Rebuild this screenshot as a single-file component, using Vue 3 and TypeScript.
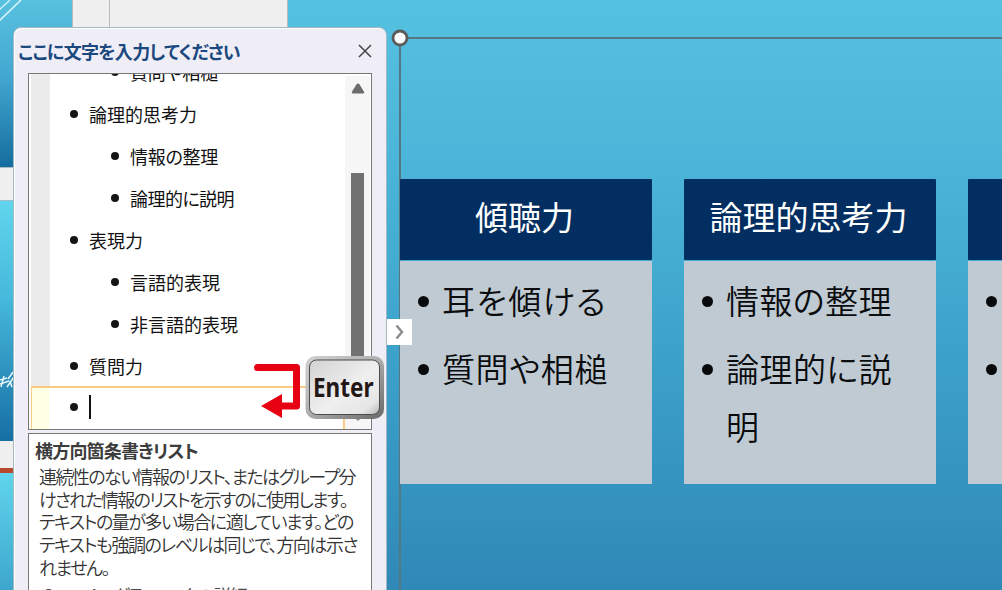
<script setup lang="ts">
interface OutlineItem {
  text: string;
  level: number;
  width: number;
}

interface Card {
  title: string;
  titleWidth: number;
  items: { text: string; width: number }[][];
}

const outline: OutlineItem[] = [
  { text: '質問や相槌', level: 2, width: 88 },
  { text: '論理的思考力', level: 1, width: 108 },
  { text: '情報の整理', level: 2, width: 88 },
  { text: '論理的に説明', level: 2, width: 104 },
  { text: '表現力', level: 1, width: 54 },
  { text: '言語的表現', level: 2, width: 90 },
  { text: '非言語的表現', level: 2, width: 108 },
  { text: '質問力', level: 1, width: 54 },
];

const description = [
  { text: '連続性のない情報のリスト、またはグループ分', width: 316 },
  { text: 'けされた情報のリストを示すのに使用します。', width: 308 },
  { text: 'テキストの量が多い場合に適しています。どの', width: 314 },
  { text: 'テキストも強調のレベルは同じで、方向は示さ', width: 318 },
  { text: 'れません。', width: 70 },
];

const cards: Card[] = [
  {
    title: '傾聴力',
    titleWidth: 99,
    items: [[{ text: '耳を傾ける', width: 165 }], [{ text: '質問や相槌', width: 166 }]],
  },
  {
    title: '論理的思考力',
    titleWidth: 198,
    items: [
      [{ text: '情報の整理', width: 166 }],
      [{ text: '論理的に説', width: 166 }, { text: '明', width: 33 }],
    ],
  },
  { title: '', titleWidth: 0, items: [[], []] },
];

// spreads or tightens the letters so that the line takes the given width
const vFit = {
  mounted(el: HTMLElement, binding: { value: number }) {
    const count = (el.textContent ?? '').length;
    if (!count || !binding.value) return;
    const natural = el.getBoundingClientRect().width;
    el.style.letterSpacing = `${(binding.value - natural) / count}px`;
  },
};
</script>

<template>
  <div class="app">
    <div class="thumbs">
      <div class="thumb first">
        <svg width="72" height="30" viewBox="0 0 72 30" fill="none" stroke="#d9f3fb">
          <path d="M-2 11 10 0" stroke-width="1.3" />
          <path d="M-2 22 21 0" stroke-width="1.6" />
        </svg>
      </div>
      <div class="thumb second">
        <svg width="14" height="26" viewBox="0 0 14 26" fill="none" stroke="#e8f8fd" stroke-width="1.5">
          <path d="M0 11 7 9M4 7 1 18M0 15 9 12M8 10 13 3M7 18 14 8M10 12 12 18" />
        </svg>
      </div>
      <div class="thumb third"></div>
    </div>
    <div class="ruler"><div class="ruler-mark"></div></div>

    <div class="slide">
      <div class="frame">
        <svg class="handle" width="20" height="20" viewBox="0 0 20 20">
          <circle cx="10" cy="10" r="7" fill="#fff" stroke="#5c5b5c" stroke-width="2.8" />
        </svg>
        <div class="cards">
          <div v-for="(card, i) in cards" :key="i" class="card">
            <div class="card-title"><span v-fit="card.titleWidth">{{ card.title }}</span></div>
            <ul class="card-body">
              <li v-for="(lines, j) in card.items" :key="j">
                <div v-for="line in lines" :key="line.text" class="card-line">
                  <span v-fit="line.width">{{ line.text }}</span>
                </div>
              </li>
            </ul>
          </div>
        </div>
      </div>
    </div>

    <div class="pane">
      <div class="pane-head">
        <div class="pane-title"><span v-fit="222">ここに文字を入力してください</span></div>
        <svg class="close" width="14" height="14" viewBox="0 0 14 14" stroke="#444" stroke-width="1.5">
          <path d="M1 1 13 13M13 1 1 13" />
        </svg>
      </div>
      <div class="outline">
        <div class="rows">
          <div v-for="(item, i) in outline" :key="i" class="row" :class="'level' + item.level">
            <i class="dot"></i>
            <span v-fit="item.width">{{ item.text }}</span>
          </div>
          <div class="row level1 active">
            <i class="dot"></i>
            <i class="caret"></i>
          </div>
        </div>
        <div class="scroll">
          <svg width="14" height="11" viewBox="0 0 14 11" fill="#6c6c6c">
            <path d="M5.7 1Q7 0 8.3 1L13.2 9Q13.5 10.5 12 10.5H2Q.5 10.5.8 9Z" />
          </svg>
          <div class="thumb-bar"></div>
          <svg class="down" width="14" height="11" viewBox="0 0 14 11" fill="#8a8a8a">
            <path d="M5.7 10Q7 11 8.3 10L13.2 2Q13.5.5 12 .5H2Q.5.5.8 2Z" />
          </svg>
        </div>
      </div>
      <div class="info">
        <div class="info-title"><span v-fit="163">横方向箇条書きリスト</span></div>
        <div v-for="line in description" :key="line.text" class="info-line">
          <span v-fit="line.width">{{ line.text }}</span>
        </div>
        <div class="info-link"><span v-fit="204">SmartArt グラフィックの詳細</span></div>
      </div>
    </div>

    <div class="toggle">
      <svg width="10" height="16" viewBox="0 0 10 16" fill="none" stroke="#8d8d8d" stroke-width="2.5">
        <path d="M1.5 1.5 7 8 1.5 14.5" />
      </svg>
    </div>

    <svg class="enter" width="136" height="72" viewBox="0 0 136 72">
      <defs>
        <linearGradient id="rim" x1="0" y1="0" x2="1" y2="1">
          <stop offset="0" stop-color="#d2d2d2" />
          <stop offset=".45" stop-color="#b2b2b2" />
          <stop offset="1" stop-color="#686868" />
        </linearGradient>
        <linearGradient id="face" x1="0" y1="0" x2="1" y2="1">
          <stop offset="0" stop-color="#d2d2d3" />
          <stop offset=".55" stop-color="#efeff0" />
          <stop offset=".85" stop-color="#e6e6e7" />
          <stop offset="1" stop-color="#b5b5b6" />
        </linearGradient>
      </defs>
      <path d="M7.5 15.5H46.500V54H32" fill="none" stroke="#e60012" stroke-width="7" stroke-linecap="round" stroke-linejoin="round" />
      <path d="M11 54 32 42V66Z" fill="#e60012" />
      <rect x="55.500" y="4" width="78.500" height="63" rx="10" fill="url(#rim)" />
      <rect x="59.500" y="8" width="70" height="54.500" rx="7" fill="url(#face)" stroke="#4b4b4b" stroke-width="1" />
      <text x="63" y="44.700" textLength="60.500" lengthAdjust="spacingAndGlyphs">Enter</text>
    </svg>
  </div>
</template>

<style>
body {
  margin: 0;
  overflow: hidden;
}
</style>

<style scoped>
.app {
  position: relative;
  display: flex;
  width: 1002px;
  height: 590px;
  overflow: hidden;
  font-family: "Noto Sans CJK JP", sans-serif;
  font-feature-settings: "palt";
  background: #efefef;
}
span {
  display: inline-block;
  white-space: nowrap;
}

/* slide thumbnails and ruler behind the pane */
.thumbs {
  display: flex;
  flex: none;
  flex-direction: column;
  width: 72px;
}
.thumb {
  box-sizing: border-box;
}
.first {
  height: 168px;
  border-bottom: 1px solid #aebdc5;
  background: linear-gradient(#58c1df, #43a8d1 45%, #156d9f);
}
.second {
  height: 241px;
  margin-top: 32px;
  padding-top: 168px;
  border-top: 1px solid #9dbdc8;
  background: linear-gradient(#61d5ed, #46b9dc 40%, #176fa3);
}
.third {
  flex: 1;
  margin-top: 27px;
  border-top: 5px solid #b9492b;
  background: linear-gradient(#60d5ed, #3da6cd);
}
.ruler {
  box-sizing: border-box;
  flex: none;
  width: 216px;
  border-left: 1px solid #bababa;
  border-right: 1px solid #bababa;
}
.ruler-mark {
  width: 36px;
  height: 100%;
  border-right: 1px solid #bababa;
}

.slide {
  box-sizing: border-box;
  flex: 1;
  min-width: 0;
  padding: 37px 0 0 111px;
  background: linear-gradient(#55c1e1 0%, #4bb3d7 30%, #3da3cb 58%, #3088b7 100%);
}
.frame {
  position: relative;
  height: 100%;
  border-left: 2px solid #557783;
  border-top: 2px solid #557783;
}
.handle {
  position: absolute;
  left: -11px;
  top: -11px;
}
.cards {
  display: flex;
  gap: 32px;
  margin: 140px 0 0 -1px;
}
.card {
  flex: none;
  width: 252px;
}
.card-title {
  height: 81px;
  line-height: 75px;
  text-align: center;
  font-size: 33px;
  color: #fff;
  background: #032e61;
  border-radius: 1px;
}
.card-title span {
  margin-left: -3px;
}
.card-body {
  box-sizing: border-box;
  height: 223px;
  margin: 1px 0 0;
  padding: 11px 0 0 42px;
  list-style: none;
  font-size: 33px;
  font-weight: 350;
  color: #0a0c0e;
  background: #bfcad2;
}
.card-body li {
  position: relative;
  min-height: 58px;
  margin-bottom: 10px;
}
.card-body li::before {
  content: "";
  position: absolute;
  left: -24px;
  top: 24px;
  width: 11px;
  height: 11px;
  border-radius: 50%;
  background: #07090b;
}
.card-line {
  height: 58px;
  line-height: 56px;
}

/* text pane */
.pane {
  position: absolute;
  left: 13px;
  top: 27px;
  box-sizing: border-box;
  display: flex;
  flex-direction: column;
  width: 374px;
  height: 580px;
  padding: 0 14px;
  border: 1px solid #a5b8c0;
  border-radius: 8px 8px 0 0;
  background: #efeef6;
  box-shadow: inset 1px 1px 0 #fff;
}
.pane-head {
  display: flex;
  flex: none;
  justify-content: space-between;
  height: 45px;
  margin-left: -10px;
}
.pane-title {
  line-height: 46px;
  font-size: 18px;
  font-weight: 700;
  color: #1b487f;
}
.close {
  margin-top: 16px;
}
.outline {
  box-sizing: border-box;
  display: flex;
  flex: none;
  height: 357px;
  padding: 2px 1px 0 2px;
  border: 1px solid #777;
  background: #fff;
  overflow: hidden;
}
.rows {
  width: 314px;
  margin-top: -25px;
  background: linear-gradient(90deg, #ebebeb 19px, #fff 19px);
}
.row {
  box-sizing: border-box;
  display: flex;
  align-items: center;
  height: 42px;
  font-size: 18px;
  color: #111;
}
.row span {
  margin-top: -1px;
}
.level1 {
  padding-left: 39px;
}
.level2 {
  padding-left: 80px;
}
.dot {
  width: 8px;
  height: 8px;
  margin-right: 11px;
  border-radius: 50%;
  background: #151515;
}
.active {
  height: 43px;
  padding-left: 38px;
  border: solid #fbcb86;
  border-width: 2px 2px 0 1px;
  margin-top: -1px;
  background: linear-gradient(90deg, #ffffe3 17px, #fff 17px);
}
.active .dot,
.active .caret {
  margin-top: -3px;
}
.caret {
  width: 2px;
  height: 24px;
  background: #111;
}
.scroll {
  display: flex;
  flex-direction: column;
  align-items: center;
  width: 25px;
  padding-top: 7px;
  background: #f6f6f6;
}
.thumb-bar {
  width: 13px;
  height: 210px;
  margin-top: 79px;
  background: #717171;
}
.down {
  margin-top: 27px;
}
.info {
  flex: 1;
  margin-top: 3px;
  padding: 2px 0 0 10px;
  border: 1px solid #777;
  background: #fff;
  overflow: hidden;
}
.info-title {
  height: 30px;
  margin-left: -4px;
  line-height: 28px;
  font-size: 18px;
  font-weight: 600;
  color: #3c3c3c;
}
.info-line {
  height: 22.700px;
  line-height: 21px;
  font-size: 18px;
  font-weight: 350;
  color: #333;
}
.info-link {
  margin-top: 3px;
  padding-left: 4px;
  line-height: 27px;
  font-size: 18px;
  color: #4b4b4b;
}
.toggle {
  position: absolute;
  left: 387px;
  top: 319px;
  display: flex;
  align-items: center;
  justify-content: center;
  width: 25px;
  height: 26px;
  background: #fff;
}

.enter {
  position: absolute;
  left: 250px;
  top: 352px;
}
.enter text {
  font: 700 27px "Noto Sans", "Open Sans", sans-serif;
  fill: #231815;
}
</style>
